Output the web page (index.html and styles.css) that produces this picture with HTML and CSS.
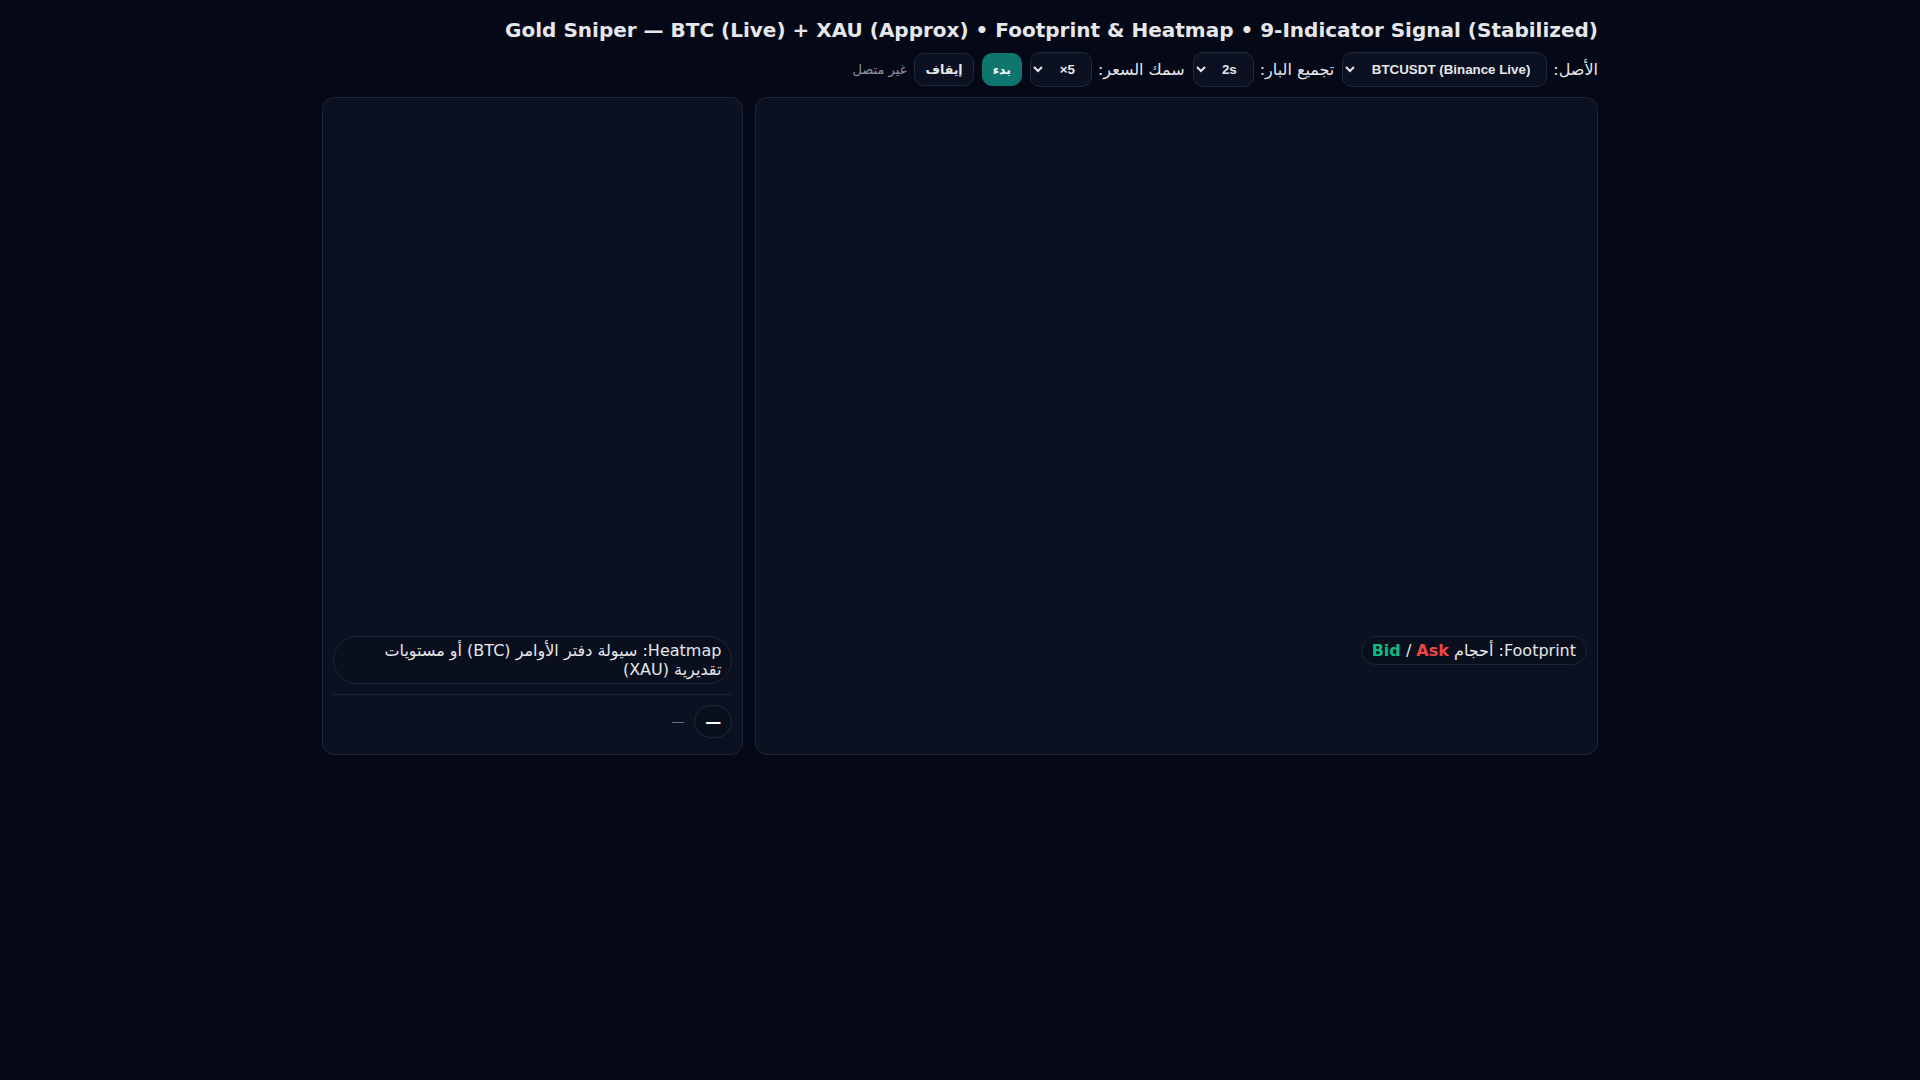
FILE: index.html
```html
<!DOCTYPE html>
<html lang="ar" dir="rtl">
<head>
  <meta charset="UTF-8" />
  <meta name="viewport" content="width=device-width, initial-scale=1.0"/>
  <title>Gold Sniper</title>
  <link rel="stylesheet" href="styles.css">
</head>
<body>
  <div class="app">
    <header class="top">
      <h1 dir="ltr">Gold Sniper — BTC (Live) + XAU (Approx) • Footprint &amp; Heatmap • 9-Indicator Signal (Stabilized)</h1>
      <div class="controls">
        <label class="field">الأصل:
          <select id="asset">
            <option>BTCUSDT (Binance Live)</option>
            <option>XAUUSD (Approx)</option>
          </select>
        </label>
        <label class="field">تجميع البار:
          <select id="agg">
            <option>2s</option>
            <option>5s</option>
          </select>
        </label>
        <label class="field">سمك السعر:
          <select id="tick">
            <option>5×</option>
            <option>2×</option>
            <option>1×</option>
          </select>
        </label>
        <button class="btn start">بدء</button>
        <button class="btn">إيقاف</button>
        <span class="status">غير متصل</span>
      </div>
    </header>

    <div class="grid">
      <section class="panel">
        <div class="chart" id="footprint"></div>
        <div class="legend">Footprint: أحجام <b class="bid">Bid</b> / <b class="ask">Ask</b></div>
      </section>

      <section class="panel">
        <div class="chart" id="heatmap"></div>
        <div class="legend">Heatmap: سيولة دفتر الأوامر (BTC) أو مستويات تقديرية (XAU)</div>
        <div class="sep"></div>
        <div class="signal">
          <span class="badge">—</span>
          <span class="muted">—</span>
        </div>
      </section>
    </div>
  </div>
</body>
</html>
```

FILE: styles.css
```css
:root {
  color-scheme: dark;
}

body {
  margin: 0;
  font-family: 'DejaVu Sans', sans-serif;
  background: #050816;
  color: #e5e7eb;
}

.app {
  max-width: 1276px;
  margin: 0 auto;
  padding: 18px 0;
}

.top {
  display: flex;
  flex-direction: column;
  gap: 10px;
}

h1 {
  margin: 0;
  font-size: 20px;
  font-weight: bold;
  text-align: right;
  color: #e5e7eb;
}

.controls {
  display: flex;
  align-items: center;
  gap: 8px;
  font-size: 16px;
}

.field {
  display: flex;
  align-items: center;
  gap: 6px;
}

select {
  height: 35px;
  padding: 0 12px;
  background: #0b1120;
  color: #e5e7eb;
  border: 1px solid #1e293b;
  border-radius: 10px;
  font: 700 13.333px 'Liberation Sans', 'DejaVu Sans', sans-serif;
}

.btn {
  padding: 8px 10px;
  background: #0b1120;
  color: #e5e7eb;
  border: 1px solid #1e293b;
  border-radius: 10px;
  font: 700 12.5px 'Liberation Sans', 'DejaVu Sans', sans-serif;
  cursor: pointer;
}

.btn.start {
  background: #0f766e;
  border-color: #0f766e;
  color: #fff;
}

.status {
  font-size: 13px;
  color: #8b93a3;
}

.grid {
  display: grid;
  grid-template-columns: 2fr 1fr;
  gap: 12px;
  margin-top: 10px;
}

.panel {
  display: flex;
  flex-direction: column;
  align-items: flex-start;
  padding: 10px;
  background: #0b1120;
  border: 1px solid #1c2537;
  border-radius: 12px;
}

.chart {
  width: 100%;
  height: 520px;
  margin-bottom: 8px;
}

.legend {
  padding: 4px 10px;
  font-size: 16px;
  color: #e5e7eb;
  background: #0a0f1d;
  border: 1px solid #1c2537;
  border-radius: 999px;
}

.bid {
  color: #10b981;
}

.ask {
  color: #ef4444;
}

.sep {
  align-self: stretch;
  height: 1px;
  margin: 10px 0;
  background: #1c2537;
}

.signal {
  display: flex;
  align-items: center;
  gap: 10px;
  padding-bottom: 6px;
}

.badge {
  padding: 6px 10px;
  font-size: 16px;
  font-weight: bold;
  color: #fff;
  background: #0a0f1d;
  border: 1px solid #1e293b;
  border-radius: 999px;
}

.muted {
  font-size: 13px;
  color: #6b7280;
}
```
